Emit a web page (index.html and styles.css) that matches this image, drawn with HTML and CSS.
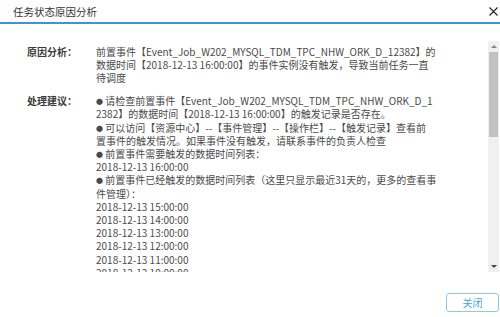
FILE: index.html
```html
<!DOCTYPE html>
<html lang="zh-CN">
<head>
    <meta charset="UTF-8">
    <title>任务状态原因分析</title>
    <link rel="stylesheet" href="styles.css">
</head>
<body>
    <div class="dialog">
        <div class="dialog-header">
            <span class="dialog-title">任务状态原因分析</span>
            <svg class="dialog-close" width="9" height="9" viewBox="0 0 9 9">
                <path d="M0.5 0.5 L8.5 8.5 M8.5 0.5 L0.5 8.5" stroke="#222" stroke-width="1.1" fill="none"/>
            </svg>
        </div>
        <div class="dialog-body">
            <div class="scroll-box">
                <div class="row">
                    <div class="label">原因分析：</div>
                    <div class="text">前置事件【Event_Job_W202_MYSQL_TDM_TPC_NHW_ORK_D_12382】的<br>数据时间【2018-12-13 16:00:00】的事件实例没有触发，导致当前任务一直<br>待调度</div>
                </div>
                <div class="row">
                    <div class="label">处理建议：</div>
                    <div class="text">
                        <p><span class="dot">●</span> 请检查前置事件【Event_Job_W202_MYSQL_TDM_TPC_NHW_ORK_D_1<br>2382】的数据时间【2018-12-13 16:00:00】的触发记录是否存在。</p>
                        <p><span class="dot">●</span> 可以访问【资源中心】--【事件管理】--【操作栏】--【触发记录】查看前<br>置事件的触发情况。如果事件没有触发，请联系事件的负责人检查</p>
                        <p><span class="dot">●</span> 前置事件需要触发的数据时间列表：</p>
                        <p>2018-12-13 16:00:00</p>
                        <p><span class="dot">●</span> 前置事件已经触发的数据时间列表（这里只显示最近31天的，更多的查看事<br>件管理）：</p>
                        <p>2018-12-13 15:00:00</p>
                        <p>2018-12-13 14:00:00</p>
                        <p>2018-12-13 13:00:00</p>
                        <p>2018-12-13 12:00:00</p>
                        <p>2018-12-13 11:00:00</p>
                        <p>2018-12-13 10:00:00</p>
                        <p>2018-12-13 09:00:00</p>
                        <p>2018-12-13 08:00:00</p>
                        <p>2018-12-13 07:00:00</p>
                        <p>2018-12-13 06:00:00</p>
                        <p>2018-12-13 05:00:00</p>
                        <p>2018-12-13 04:00:00</p>
                        <p>2018-12-13 03:00:00</p>
                        <p>2018-12-13 02:00:00</p>
                        <p>2018-12-13 01:00:00</p>
                        <p>2018-12-13 00:00:00</p>
                    </div>
                </div>
            </div>
            <div class="scrollbar">
                <div class="scroll-btn"><span class="arrow-up"></span></div>
                <div class="scroll-track">
                    <div class="scroll-thumb"></div>
                </div>
                <div class="scroll-btn"><span class="arrow-down"></span></div>
            </div>
        </div>
        <div class="dialog-footer">
            <button class="btn-close">关闭</button>
        </div>
    </div>
</body>
</html>
```

FILE: styles.css
```css
body {
    margin: 0;
    font-family: "Noto Sans CJK SC", "Noto Sans", sans-serif;
    background-color: #fff;
    color: #4a4a4a;
}

.dialog {
    display: flex;
    flex-direction: column;
    width: 500px;
    height: 317px;
}

.dialog-header {
    display: flex;
    justify-content: space-between;
    align-items: center;
    height: 22px;
    padding: 0 2px 0 13px;
    border-bottom: 2px solid #3a94dc;
}

.dialog-title {
    font-size: 10.5px;
    color: #333;
}

.dialog-body {
    display: flex;
    height: 231px;
    margin-top: 17px;
    padding-right: 1px;
}

.scroll-box {
    flex: 1;
    overflow: hidden;
    padding: 3.5px 0 0 27px;
    font-size: 10px;
    line-height: 13.2px;
}

.row {
    display: flex;
    margin-bottom: 10px;
}

.label {
    width: 69px;
    flex-shrink: 0;
    font-weight: bold;
    color: #3a3a3a;
}

.text {
    white-space: nowrap;
}

.text p {
    margin: 0;
}

.dot {
    font-size: 7px;
    line-height: 0;
    vertical-align: 1px;
}

/* fake scrollbar */
.scrollbar {
    display: flex;
    flex-direction: column;
    width: 11px;
    background-color: #f0f0f0;
}

.scroll-btn {
    display: flex;
    justify-content: center;
    align-items: center;
    height: 11px;
}

.arrow-up {
    border-left: 3px solid transparent;
    border-right: 3px solid transparent;
    border-bottom: 3px solid #888;
}

.arrow-down {
    border-left: 3px solid transparent;
    border-right: 3px solid transparent;
    border-top: 3px solid #444;
}

.scroll-track {
    flex: 1;
    padding: 0 1px;
}

.scroll-thumb {
    height: 85px;
    background-color: #c1c1c1;
}

.dialog-footer {
    display: flex;
    justify-content: flex-end;
    padding: 21px 1px 0 0;
}

.btn-close {
    width: 53px;
    height: 19px;
    padding: 0;
    border: 1px solid #8ec7f2;
    border-radius: 3px;
    background-color: #fff;
    color: #4a9fe3;
    font-family: inherit;
    font-size: 10px;
}
```
